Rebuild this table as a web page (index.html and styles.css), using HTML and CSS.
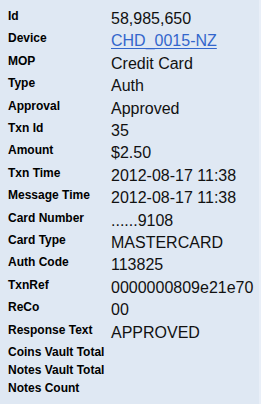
FILE: index.html
```html
<!DOCTYPE html>
<html>
<head>
<meta charset="utf-8">
<link rel="stylesheet" href="styles.css">
</head>
<body>
<div class="panel">
  <dl class="details">
    <div class="row"><dt>Id</dt><dd>58,985,650</dd></div>
    <div class="row"><dt>Device</dt><dd><a href="#" class="link">CHD_0015-NZ</a></dd></div>
    <div class="row"><dt>MOP</dt><dd>Credit Card</dd></div>
    <div class="row"><dt>Type</dt><dd>Auth</dd></div>
    <div class="row"><dt>Approval</dt><dd>Approved</dd></div>
    <div class="row"><dt>Txn Id</dt><dd>35</dd></div>
    <div class="row"><dt>Amount</dt><dd>$2.50</dd></div>
    <div class="row"><dt>Txn Time</dt><dd>2012-08-17 11:38</dd></div>
    <div class="row"><dt>Message Time</dt><dd>2012-08-17 11:38</dd></div>
    <div class="row"><dt>Card Number</dt><dd>......9108</dd></div>
    <div class="row"><dt>Card Type</dt><dd>MASTERCARD</dd></div>
    <div class="row"><dt>Auth Code</dt><dd>113825</dd></div>
    <div class="row"><dt>TxnRef</dt><dd>0000000809e21e70</dd></div>
    <div class="row"><dt>ReCo</dt><dd>00</dd></div>
    <div class="row"><dt>Response Text</dt><dd>APPROVED</dd></div>
    <div class="row"><dt>Coins Vault Total</dt><dd></dd></div>
    <div class="row"><dt>Notes Vault Total</dt><dd></dd></div>
    <div class="row"><dt>Notes Count</dt><dd></dd></div>
  </dl>
</div>
</body>
</html>
```
FILE: styles.css
```css
html, body {
  margin: 0;
  padding: 0;
  background: #dfe8f3;
}
.panel {
  box-sizing: border-box;
  width: 261px;
  height: 404px;
  padding: 8px 0 0 8px;
  border-right: 2px solid #e9eff8;
  font-family: "Liberation Sans", Arial, sans-serif;
  color: #000;
}
.details {
  margin: 0;
  display: flex;
  flex-direction: column;
}
.row {
  display: grid;
  grid-template-columns: 103px auto;
  align-items: start;
  padding: 2px 0;
}
.row dt {
  font-size: 12px;
  font-weight: bold;
  line-height: 13.8px;
  margin: 0;
}
.row dd {
  font-size: 16px;
  line-height: 18.4px;
  margin: 0;
  color: #111;
}
.link {
  color: #3366cc;
  text-decoration: underline;
  text-decoration-thickness: 1px;
  text-underline-offset: 1.5px;
}
```
